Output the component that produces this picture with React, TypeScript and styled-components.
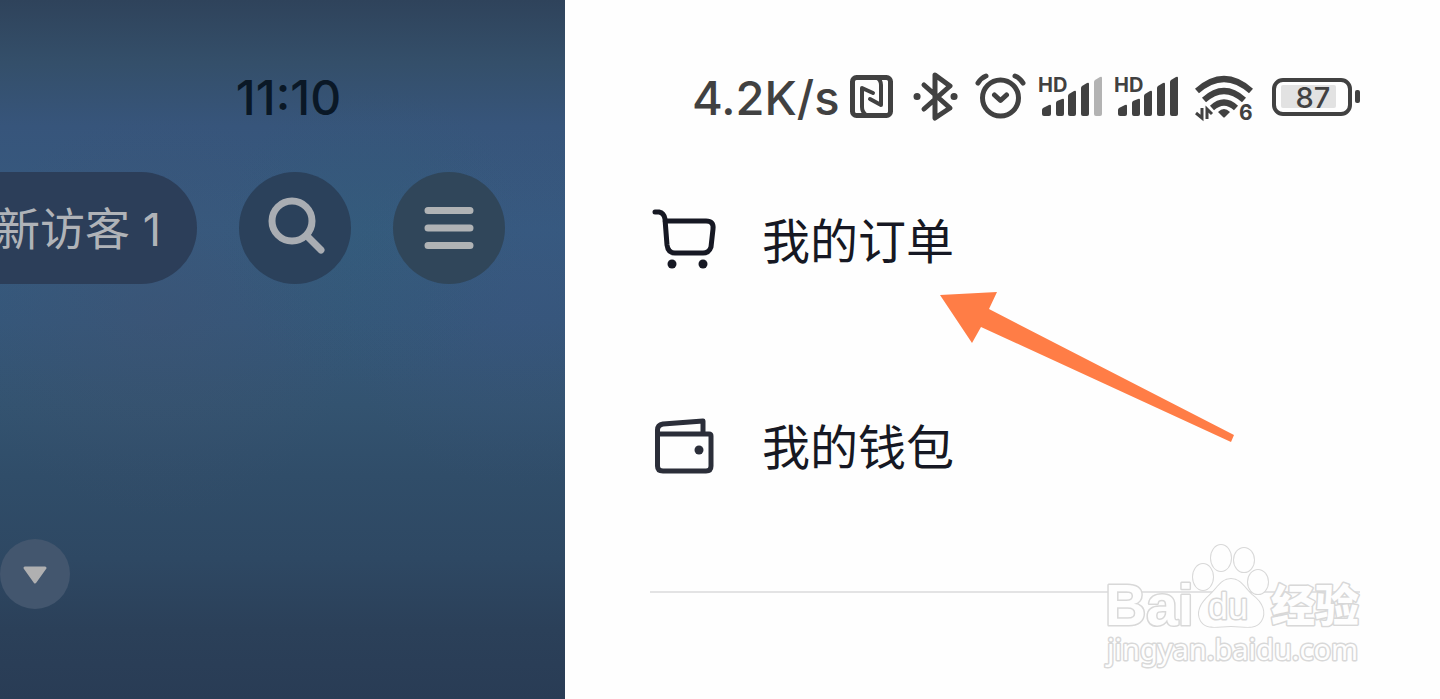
import React from "react";
import styled, { createGlobalStyle } from "styled-components";

const GlobalStyle = createGlobalStyle`
  * { box-sizing: border-box; }
  body {
    margin: 0;
    background: #fefefe;
    font-family: Inter, "Noto Sans CJK SC", sans-serif;
  }
`;

const Page = styled.div`
  display: grid;
  grid-template-columns: 565fr 875fr;
  min-height: 100vh;
`;

const Profile = styled.section`
  display: flex;
  flex-direction: column;
  min-width: 0;
  padding-top: 68px;
  background:
    radial-gradient(circle at 92% 44%, rgba(65, 82, 135, 0.2), transparent 28%),
    radial-gradient(circle at 66% 34%, rgba(45, 96, 112, 0.2), transparent 26%),
    radial-gradient(circle at 28% 45%, rgba(70, 80, 110, 0.28), transparent 36%),
    linear-gradient(
      #2f435b 0%, #344f6a 9%, #37557b 18%, #365a7f 33%, #35577a 46%,
      #335370 58%, #304d69 68%, #2e4863 80%, #2b4059 90%, #293c55 100%
    );
`;

const Clock = styled.time`
  padding-left: 12px;
  color: #0a1826;
  font-size: 48px;
  font-weight: 500;
  line-height: 60px;
  text-align: center;
`;

const Toolbar = styled.div`
  display: flex;
  gap: 42px;
  margin-top: 44px;
  padding-right: 60px;
`;

const VisitorChip = styled.button`
  display: flex;
  flex: 1;
  align-items: center;
  justify-content: flex-end;
  min-width: 0;
  height: 112px;
  padding: 0 36px 4px 0;
  overflow: hidden;
  border: 0;
  border-radius: 0 56px 56px 0;
  background: #2c3e59;
  color: #b0b3b8;
  font-family: Inter, "Noto Sans CJK SC", sans-serif;
  font-size: 45px;
  white-space: nowrap;
`;

const RoundButton = styled.button<{ $size: number; $color: string }>`
  display: flex;
  flex: none;
  align-items: center;
  justify-content: center;
  width: ${(p) => p.$size}px;
  height: ${(p) => p.$size}px;
  padding: 0;
  border: 0;
  border-radius: 50%;
  background: ${(p) => p.$color};
`;

const Expand = styled.div`
  margin-top: 255px;
`;

const Drawer = styled.main`
  position: relative;
  min-width: 0;
  padding: 68px 80px 0 85px;
`;

const StatusBar = styled.header`
  display: flex;
  align-items: center;
  height: 60px;
  padding-left: 42px;
  color: #414141;
`;

const Speed = styled.span`
  width: 157px;
  flex: none;
  font-size: 47px;
  font-weight: 500;
  line-height: 60px;
  white-space: nowrap;
`;

const StatusIcons = styled.svg`
  flex: none;
`;

const Menu = styled.nav`
  display: flex;
  flex-direction: column;
  gap: 134px;
  margin-top: 74px;
`;

const MenuLink = styled.a`
  display: flex;
  align-items: center;
  gap: 44px;
  height: 72px;
  color: #161823;
  font-family: "Noto Sans CJK SC", sans-serif;
  font-size: 48px;
  line-height: 72px;
  text-decoration: none;
`;

const Divider = styled.hr`
  height: 2px;
  margin: 111px 0 0;
  border: 0;
  background: #e3e3e4;
`;

const Arrow = styled.svg`
  position: absolute;
  top: 290px;
  left: 373px;
`;

const Watermark = styled.svg`
  position: absolute;
  top: 540px;
  right: 70px;
`;

const SignalBars = ({ x, faded }: { x: number; faded?: boolean }) => (
  <g transform={`translate(${x} 1)`} fill="#414141">
    <text x="-1" y="23" fontFamily="Inter, sans-serif" fontSize="20" fontWeight="700">HD</text>
    <path d="M3 45v-4q0-1 1-2l6-3q2-1 2 1v8q0 2-2 2H5q-2 0-2-2Z" />
    <path d="M17 45V34q0-1 1-2l5-2q2-1 2 1v14q0 2-2 2h-4q-2 0-2-2Z" />
    <path d="M29 45V27q0-1 1-2l5-3q2-1 2 1v22q0 2-2 2h-4q-2 0-2-2Z" />
    <path d="M42 45V19q0-1 1-2l5-3q2-1 2 1v30q0 2-2 2h-4q-2 0-2-2Z" />
    <path fill={faded ? "#b3b3b3" : "#414141"} d="M55 45V13q0-1 1-2l5-3q2-1 2 1v36q0 2-2 2h-4q-2 0-2-2Z" />
  </g>
);

export default function App() {
  return (
    <>
      <GlobalStyle />
      <Page>
        <Profile>
          <Clock>11:10</Clock>
          <Toolbar>
            <VisitorChip>新访客 1</VisitorChip>
            <RoundButton $size={112} $color="#2b415b" aria-label="搜索">
              <svg width="112" height="112" fill="none" stroke="#a9adb3" strokeWidth="7" strokeLinecap="round">
                <circle cx="53" cy="49" r="20" />
                <path d="M68 64 82 78" />
              </svg>
            </RoundButton>
            <RoundButton $size={112} $color="#30465a" aria-label="菜单">
              <svg width="112" height="112" stroke="#b0b3b5" strokeWidth="7" strokeLinecap="round">
                <path d="M35 38.500H77M35 56H77M35 73.500H77" />
              </svg>
            </RoundButton>
          </Toolbar>
          <Expand>
            <RoundButton $size={70} $color="#43566e" aria-label="展开">
              <svg width="70" height="70" fill="#b0b0b1" stroke="#b0b0b1" strokeWidth="3" strokeLinejoin="round">
                <path d="M25 29H45L35 43Z" />
              </svg>
            </RoundButton>
          </Expand>
        </Profile>

        <Drawer>
          <StatusBar>
            <Speed>4.2K/s</Speed>
            {/* NFC, bluetooth, alarm, signal, Wi-Fi and battery */}
            <StatusIcons width="514" height="60" viewBox="0 0 514 60" aria-hidden="true">
              <g fill="none" stroke="#414141" strokeWidth="5" strokeLinecap="round" strokeLinejoin="round">
                <rect x="3.500" y="9.500" width="38" height="38" rx="4" />
                <path strokeWidth="4" d="M17 47Q13 44 13 39V20L24 25M28 10Q32 12 32 17V37L21 31" />
                <path d="M75 17 101 40 86 50V7L101 18 75 41" />
                <path strokeWidth="7" d="M68 28.500h.1M105 28.500h.1" />
                <circle cx="151.500" cy="30" r="18" />
                <path d="M145.500 27 151.500 32.500 157.500 27M129 15Q132 10 137 8M166 8Q171 10 174 15" />
              </g>
              <SignalBars x={190} faded />
              <SignalBars x={266} />
              <g fill="none" stroke="#414141" strokeWidth="6">
                <path d="M348 23Q375 -1 402 23" />
                <path d="M355 32Q375 14 395 32" />
                <path d="M363 40Q375 29 387 40" />
                <path fill="#414141" stroke="none" d="M375 41Q378 41 381 44L376 49Q375 50 374 49L369 44Q372 41 375 41Z" />
                <path strokeWidth="3" d="M353 40V50L347 45M358 51V41L363 46" />
              </g>
              <text x="390" y="52" fill="#414141" fontFamily="Inter, sans-serif" fontSize="21" fontWeight="700">6</text>
              <rect x="425" y="12" width="76" height="34" rx="9" fill="none" stroke="#414141" strokeWidth="4" />
              <rect x="432" y="17" width="55" height="23" rx="2" fill="#e2e2e2" />
              <rect x="506" y="22" width="5" height="13" rx="2" fill="#414141" />
              <text x="464" y="40" fill="#414141" fontFamily="Inter, sans-serif" fontSize="29" fontWeight="500" textAnchor="middle">87</text>
            </StatusIcons>
          </StatusBar>

          <Menu>
            <MenuLink href="#orders">
              <svg width="68" height="64" viewBox="0 0 68 64" fill="none" stroke="#161823" strokeWidth="5" strokeLinecap="round" strokeLinejoin="round">
                <path d="M5 6H9Q14 7 15 13L17 39Q18 47 25 47H53Q59 47 61 41L63 23Q64 15 56 15H15" />
                <circle cx="22" cy="58" r="4.500" fill="#161823" stroke="none" />
                <circle cx="53" cy="58" r="4.500" fill="#161823" stroke="none" />
              </svg>
              我的订单
            </MenuLink>
            <MenuLink href="#wallet">
              <svg width="68" height="64" viewBox="0 0 68 64" fill="none" stroke="#2b2e39" strokeWidth="5" strokeLinejoin="round">
                <path d="M7.500 22H59Q61 22 61 24V54Q61 59 56 59H13Q7.500 59 7.500 54V18Q7.500 13 13 12L53 9V21" />
                <circle cx="49" cy="38" r="4.500" fill="#2b2e39" stroke="none" />
              </svg>
              我的钱包
            </MenuLink>
          </Menu>
          <Divider />

          <Arrow width="300" height="160" viewBox="938 290 300 160" aria-hidden="true">
            <path fill="#ff7d46" d="M940 295 997 292 989 309 1234 435 1231 442 981 327 972 343Z" />
          </Arrow>

          <Watermark width="270" height="140" viewBox="1100 540 270 140" fill="#fefefe" stroke="#d8d8d8" strokeWidth="3" strokeLinejoin="round" paintOrder="stroke">
            <text x="1105" y="625" fontFamily="Liberation Sans, sans-serif" fontSize="57" fontWeight="700">Bai</text>
            <g strokeWidth="2">
              <ellipse cx="1203" cy="577" rx="10" ry="13" />
              <ellipse cx="1221" cy="558" rx="10" ry="13" />
              <ellipse cx="1244" cy="560" rx="10" ry="12" />
              <ellipse cx="1258" cy="582" rx="10" ry="12" />
              <path d="M1231 579C1241 579 1244 588 1252 595C1263 603 1266 613 1261 621C1255 630 1244 626 1231 626C1218 626 1207 630 1201 621C1196 612 1201 603 1210 595C1218 588 1221 579 1231 579Z" />
            </g>
            <text x="1208" y="619" fontFamily="Liberation Sans, sans-serif" fontSize="36">du</text>
            <text x="1271" y="622" fontFamily="Noto Sans CJK SC, sans-serif" fontSize="44" fontWeight="900">经验</text>
            <text x="1107" y="660" fontFamily="Noto Sans, sans-serif" fontSize="29">jingyan.baidu.com</text>
          </Watermark>
        </Drawer>
      </Page>
    </>
  );
}
